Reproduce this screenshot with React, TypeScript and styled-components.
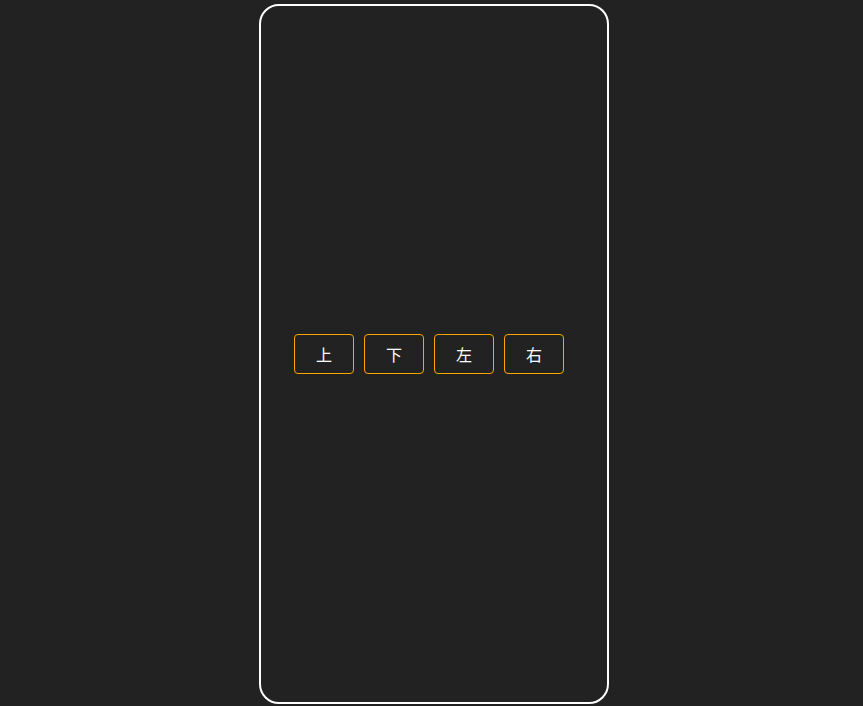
import React from 'react';
import styled, { createGlobalStyle } from 'styled-components';

const GlobalStyle = createGlobalStyle`
  html, body {
    margin: 0;
    padding: 0;
    background-color: #222222;
    font-family: 'Noto Sans CJK SC', 'Noto Sans', sans-serif;
  }
`;

const Page = styled.div`
  display: flex;
  padding: 4px 0 0 259px;
  height: 706px;
  box-sizing: border-box;
`;

const Phone = styled.div`
  width: 350px;
  height: 700px;
  box-sizing: border-box;
  border: 2px solid #ffffff;
  border-radius: 20px;
  display: flex;
  align-items: center;
  justify-content: center;
`;

const ButtonRow = styled.div`
  display: flex;
`;

const DirButton = styled.button`
  width: 60px;
  height: 40px;
  margin-right: 10px;
  padding: 0;
  box-sizing: border-box;
  background-color: transparent;
  border: 1px solid #ffa500;
  border-radius: 4px;
  color: #ffffff;
  font-family: 'Noto Sans CJK SC', sans-serif;
  font-size: 16px;
  cursor: pointer;
`;

const directions = ['上', '下', '左', '右'];

const App: React.FC = () => {
  return (
    <>
      <GlobalStyle />
      <Page>
        <Phone>
          <ButtonRow>
            {directions.map((d) => (
              <DirButton key={d}>{d}</DirButton>
            ))}
          </ButtonRow>
        </Phone>
      </Page>
    </>
  );
};

export default App;
